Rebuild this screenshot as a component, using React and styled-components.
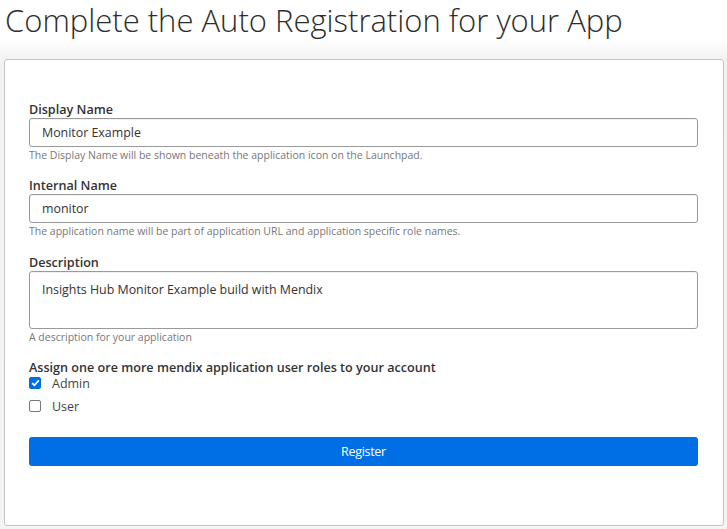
import React from 'react';
import styled, { createGlobalStyle } from 'styled-components';

const GlobalStyle = createGlobalStyle`
  body {
    margin: 0;
    background: #fff;
    font-family: 'Open Sans', 'Noto Sans', sans-serif;
    color: #333;
  }
`;

const Page = styled.div`
  width: 727px;
  height: 529px;
  overflow: hidden;
  box-sizing: border-box;
  padding: 0 3px 0 4px;
  background: linear-gradient(to bottom, #fff 0, #fff 38px, #f2f2f2 58px, #f4f4f4 100%);
`;

const Title = styled.h1`
  margin: 0 -3px 0 -4px;
  padding: 0 0 0 5px;
  height: 59px;
  box-sizing: border-box;
  font-size: 31px;
  font-weight: 300;
  line-height: 40px;
  color: #2d2d2d;
  background: linear-gradient(to bottom, #fff 0, #fff 38px, #f3f3f3 59px);
`;

const Card = styled.div`
  background: #fff;
  border: 1px solid #c6c6c6;
  border-radius: 3px;
  padding: 42px 25px 59px 24px;
  display: flex;
  flex-direction: column;
`;

const Field = styled.div`
  display: flex;
  flex-direction: column;
  margin-bottom: ${p => p.gap || 0}px;
`;

const Label = styled.label`
  font-size: 12.6px;
  font-weight: 600;
  color: #333;
  line-height: 16px;
`;

const Input = styled.div`
  height: ${p => p.tall ? 58 : 29}px;
  box-sizing: border-box;
  border: 1px solid #9a9a9a;
  border-radius: 3px;
  padding: ${p => p.tall ? '9px' : '0'} 12px 0;
  display: flex;
  align-items: ${p => p.tall ? 'flex-start' : 'center'};
  font-size: 12.4px;
  color: #333;
  box-shadow: inset 0 1px 1px rgba(0, 0, 0, .06);
`;

const Help = styled.div`
  font-size: 10.5px;
  color: #777;
  line-height: 16px;
`;

const Checks = styled.div`
  display: flex;
  flex-direction: column;
  gap: 7px;
  margin-top: -1px;
`;

const CheckRow = styled.div`
  display: flex;
  align-items: center;
  gap: 11px;
  font-size: 12.5px;
  color: #444;
  height: 16px;
`;

const Box = styled.span`
  width: 12px;
  height: 12px;
  box-sizing: border-box;
  border-radius: 2px;
  border: 1px solid ${p => p.checked ? '#006fe6' : '#777'};
  background: ${p => p.checked ? '#006fe6' : '#fff'};
  display: flex;
  align-items: center;
  justify-content: center;
`;

const Button = styled.button`
  margin-top: 23px;
  height: 29px;
  border: none;
  border-radius: 3px;
  background: #006fe6;
  color: #fff;
  font-family: 'Open Sans', 'Noto Sans', sans-serif;
  font-size: 12.5px;
  letter-spacing: -0.3px;
`;

const Check = ({ checked, children }) => (
  <CheckRow>
    <Box checked={checked}>
      {checked && (
        <svg width="9" height="8" viewBox="0 0 9 8">
          <path d="M1.2 4.2 L3.4 6.3 L7.8 1.4" stroke="#fff" strokeWidth="1.8" fill="none" />
        </svg>
      )}
    </Box>
    {children}
  </CheckRow>
);

export default function App() {
  return (
    <Page>
      <GlobalStyle />
      <Title>Complete the Auto Registration for your App</Title>
      <Card>
        <Field gap={15}>
          <Label>Display Name</Label>
          <Input>Monitor Example</Input>
          <Help>The Display Name will be shown beneath the application icon on the Launchpad.</Help>
        </Field>
        <Field gap={16}>
          <Label>Internal Name</Label>
          <Input>monitor</Input>
          <Help>The application name will be part of application URL and application specific role names.</Help>
        </Field>
        <Field gap={15}>
          <Label>Description</Label>
          <Input tall>Insights Hub Monitor Example build with Mendix</Input>
          <Help>A description for your application</Help>
        </Field>
        <Field>
          <Label>Assign one ore more mendix application user roles to your account</Label>
          <Checks>
            <Check checked>Admin</Check>
            <Check>User</Check>
          </Checks>
        </Field>
        <Button>Register</Button>
      </Card>
    </Page>
  );
}
